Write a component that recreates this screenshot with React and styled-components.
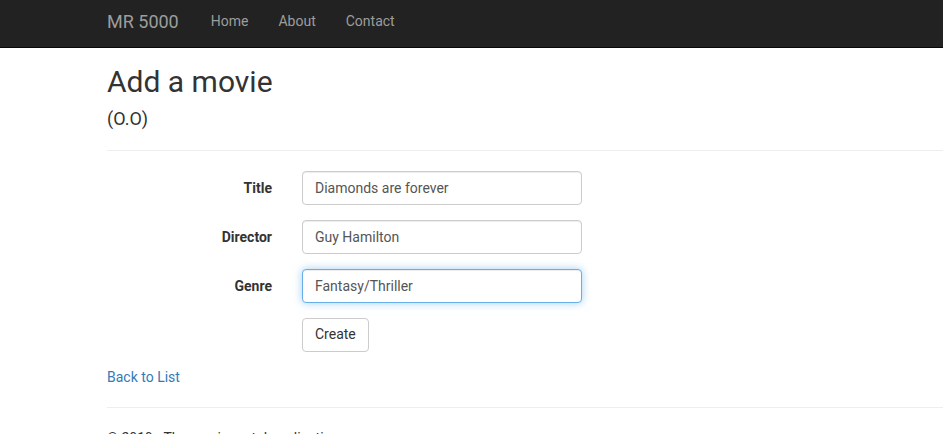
import React from 'react'
import styled, { createGlobalStyle } from 'styled-components'

const GlobalStyle = createGlobalStyle`
  * { box-sizing: border-box; }
  body {
    margin: 0;
    font-family: Roboto, "Noto Sans", Arial, sans-serif;
    font-size: 14px;
    line-height: 1.42857;
    color: #333;
    background: #fff;
    overflow: hidden;
  }
`

const Navbar = styled.nav`
  height: 48px;
  background: #222;
  border-bottom: 1px solid #080808;
  display: flex;
  align-items: center;
  padding: 0 0 3px 92px;
`

const Brand = styled.a`
  font-size: 18px;
  color: #9d9d9d;
  padding: 0 17px 0 15px;
  text-decoration: none;
`

const NavLink = styled.a`
  font-size: 14px;
  color: #9d9d9d;
  padding: 0 15px;
  text-decoration: none;
`

const Container = styled.main`
  padding-left: 107px;
`

const Title = styled.h2`
  font-size: 30px;
  font-weight: 400;
  line-height: 1.1;
  margin: 17px 0 10px;
  color: #333;
`

const Subtitle = styled.h4`
  font-size: 18px;
  font-weight: 400;
  line-height: 1.1;
  margin: 11px 0 0;
`

const Rule = styled.hr`
  border: 0;
  border-top: 1px solid #eee;
  margin: ${p => p.$top}px -200px ${p => p.$bottom}px 0;
`

const Form = styled.form`
  display: flex;
  flex-direction: column;
  gap: 15px;
`

const Row = styled.div`
  display: grid;
  grid-template-columns: 165px 280px;
  column-gap: 30px;
  align-items: start;
`

const Label = styled.label`
  text-align: right;
  font-weight: 700;
  padding-top: 7px;
  line-height: 20px;
`

const Input = styled.input`
  width: 280px;
  height: 34px;
  padding: 6px 12px;
  font: inherit;
  color: #555;
  background: #fff;
  border: 1px solid ${p => (p.$focused ? '#66afe9' : '#ccc')};
  border-radius: 4px;
  outline: none;
  box-shadow: ${p =>
    p.$focused
      ? 'inset 0 1px 1px rgba(0,0,0,.075), 0 0 8px rgba(102,175,233,.6)'
      : 'inset 0 1px 1px rgba(0,0,0,.075)'};
`

const Button = styled.button`
  grid-column: 2;
  justify-self: start;
  height: 34px;
  padding: 6px 12px;
  font: inherit;
  color: #333;
  background: #fff;
  border: 1px solid #ccc;
  border-radius: 4px;
`

const BackLink = styled.a`
  display: block;
  margin-top: 15px;
  color: #337ab7;
  text-decoration: none;
  line-height: 20px;
`

const Footer = styled.footer`
  line-height: 20px;
`

const fields = [
  { label: 'Title', value: 'Diamonds are forever' },
  { label: 'Director', value: 'Guy Hamilton' },
  { label: 'Genre', value: 'Fantasy/Thriller', focused: true },
]

const App = () => {
  return (
    <>
      <GlobalStyle />
      <Navbar>
        <Brand href="#">MR 5000</Brand>
        <NavLink href="#">Home</NavLink>
        <NavLink href="#">About</NavLink>
        <NavLink href="#">Contact</NavLink>
      </Navbar>
      <Container>
        <Title>Add a movie</Title>
        <Subtitle>(O.O)</Subtitle>
        <Rule $top={21} $bottom={20} />
        <Form onSubmit={e => e.preventDefault()}>
          {fields.map(f => (
            <Row key={f.label}>
              <Label>{f.label}</Label>
              <Input defaultValue={f.value} $focused={f.focused} />
            </Row>
          ))}
          <Row>
            <Button type="submit">Create</Button>
          </Row>
        </Form>
        <BackLink href="#">Back to List</BackLink>
        <Rule $top={20} $bottom={20} />
        <Footer>© 2019 - The movie rental application</Footer>
      </Container>
    </>
  )
}

export default App
